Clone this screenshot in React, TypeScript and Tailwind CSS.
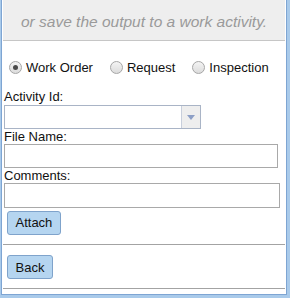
import React from "react";

const font = { fontFamily: '"Liberation Sans", Arial, sans-serif' };

function Radio({ checked, label }: { checked?: boolean; label: string }) {
  return (
    <div className="flex items-center">
      <span className="relative w-[13px] h-[13px] rounded-full border border-[#a6a6a6] bg-gradient-to-b from-[#f4f4f4] to-[#dcdcdc] flex items-center justify-center">
        {checked && <span className="w-[5px] h-[5px] rounded-full bg-[#4a4a4a]" />}
      </span>
      <span className="ml-[4px] text-[13px] leading-[15px] text-[#111]">{label}</span>
    </div>
  );
}

export default function App() {
  return (
    <div style={font} className="w-[290px] h-[298px] bg-[#a9caea] pl-[1px] pr-[3px] pb-[3px]">
      <div className="h-full bg-white border-l border-r border-b border-[#7ea5d3] px-[1px] overflow-hidden">
        <div className="h-[41px] bg-[#eeeeee] border-b border-[#c6c6c6] flex items-center justify-center pt-[3px]">
          <span className="italic text-[15.5px] text-[#9a9a9a] leading-[18px]">
            or save the output to a work activity.
          </span>
        </div>
        <div className="pl-[1px]">
          <div className="mt-[17px] h-[18px] flex items-center pl-[5px] gap-[17px]">
            <Radio checked label="Work Order" />
            <Radio label="Request" />
            <Radio label="Inspection" />
          </div>
          <div className="mt-[13px] h-[15px] leading-[15px] text-[13px] text-[#111]">Activity Id:</div>
          <div className="mt-[1px] w-[197px] h-[24px] border border-[#a9b4c6] flex">
            <div className="flex-1" />
            <div className="w-[19px] h-full bg-[#eeeeee] border-l border-[#c8cfdc] flex items-center justify-center">
              <svg width="8" height="5" viewBox="0 0 8 5">
                <path d="M0 0 L8 0 L4 5 Z" fill="#8d9fc6" />
              </svg>
            </div>
          </div>
          <div className="h-[15px] leading-[15px] text-[13px] text-[#111]">File Name:</div>
          <div className="w-[274px] h-[24px] border border-[#a9a9a9]" />
          <div className="h-[15px] leading-[15px] text-[13px] text-[#111]">Comments:</div>
          <div className="w-[276px] h-[25px] border border-[#a9a9a9]" />
          <div className="mt-[2px] pl-[3px]">
            <button className="h-[24px] px-[7.5px] rounded-[3px] border border-[#7fa3cb] bg-[#b5d5f0] text-[13px] text-[#111] leading-[15px]">
              Attach
            </button>
          </div>
        </div>
        <div className="mt-[9px] h-px bg-[#a3a3a3]" />
        <div className="mt-[10px] pl-[4px]">
          <button className="h-[24px] px-[7.5px] rounded-[3px] border border-[#7fa3cb] bg-[#b5d5f0] text-[13px] text-[#111] leading-[15px]">
            Back
          </button>
        </div>
        <div className="mt-[9px] h-px bg-[#a3a3a3]" />
      </div>
    </div>
  );
}
